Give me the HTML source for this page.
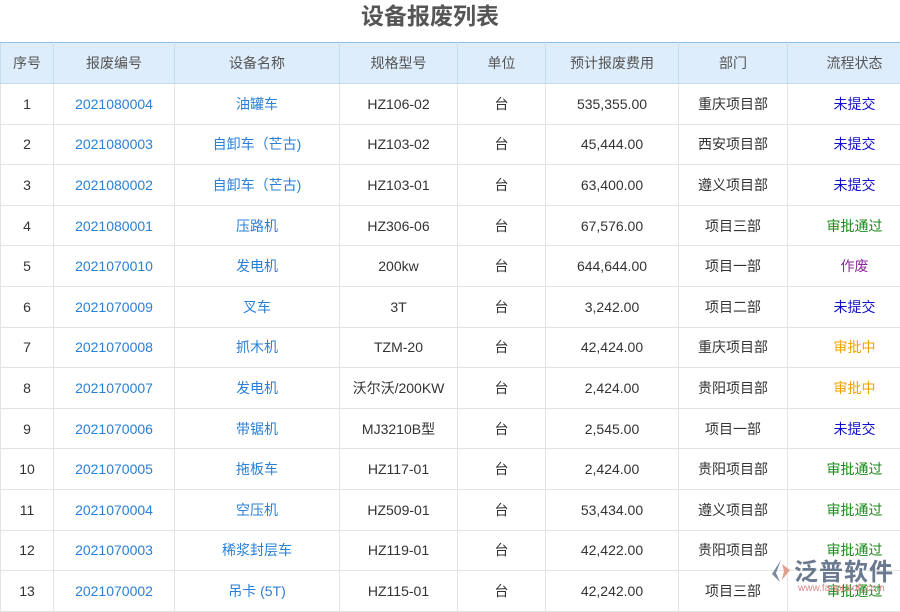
<!DOCTYPE html><html><head><meta charset="utf-8"><style>
body{margin:0;width:900px;height:600px;overflow:hidden;background:#fff;font-family:"Liberation Sans","Noto Sans CJK SC",sans-serif;position:relative}
h1{margin:0;height:42px;line-height:32px;text-align:center;font-size:23px;color:#555;font-weight:bold;padding-right:40px}
table{border-collapse:collapse;position:absolute;top:42px;left:0;width:921px;table-layout:fixed}
td,th{border:1px solid #e3e3e3;text-align:center;font-size:14px;color:#333;height:39.6px;padding:0;font-weight:normal}
th{background:#deedfb;color:#555;border-color:#c6dcef;height:40px}
tr:first-child th{border-top:1px solid #8fbfe8}
.l{color:#2a7fd6}.u{color:#1010c8}.g{color:#1a8a1a}.p{color:#8a2b9a}.o{color:#f0a000}
.wm{position:absolute;left:768px;top:552px;font-size:24px;color:#6a7890;font-weight:bold;letter-spacing:1px;white-space:nowrap}
.wm span{font-size:10px;color:#d88;position:absolute;left:30px;top:31px;letter-spacing:0;font-weight:normal}
</style></head><body>
<h1>设备报废列表</h1>
<table>
<colgroup><col style="width:53px"><col style="width:121px"><col style="width:165px"><col style="width:118px"><col style="width:88px"><col style="width:133px"><col style="width:109px"><col style="width:134px"></colgroup>
<tr><th>序号</th><th>报废编号</th><th>设备名称</th><th>规格型号</th><th>单位</th><th>预计报废费用</th><th>部门</th><th>流程状态</th></tr>
<tr><td>1</td><td class="l">2021080004</td><td class="l">油罐车</td><td>HZ106-02</td><td>台</td><td>535,355.00</td><td>重庆项目部</td><td class="u">未提交</td></tr>
<tr><td>2</td><td class="l">2021080003</td><td class="l">自卸车（芒古)</td><td>HZ103-02</td><td>台</td><td>45,444.00</td><td>西安项目部</td><td class="u">未提交</td></tr>
<tr><td>3</td><td class="l">2021080002</td><td class="l">自卸车（芒古)</td><td>HZ103-01</td><td>台</td><td>63,400.00</td><td>遵义项目部</td><td class="u">未提交</td></tr>
<tr><td>4</td><td class="l">2021080001</td><td class="l">压路机</td><td>HZ306-06</td><td>台</td><td>67,576.00</td><td>项目三部</td><td class="g">审批通过</td></tr>
<tr><td>5</td><td class="l">2021070010</td><td class="l">发电机</td><td>200kw</td><td>台</td><td>644,644.00</td><td>项目一部</td><td class="p">作废</td></tr>
<tr><td>6</td><td class="l">2021070009</td><td class="l">叉车</td><td>3T</td><td>台</td><td>3,242.00</td><td>项目二部</td><td class="u">未提交</td></tr>
<tr><td>7</td><td class="l">2021070008</td><td class="l">抓木机</td><td>TZM-20</td><td>台</td><td>42,424.00</td><td>重庆项目部</td><td class="o">审批中</td></tr>
<tr><td>8</td><td class="l">2021070007</td><td class="l">发电机</td><td>沃尔沃/200KW</td><td>台</td><td>2,424.00</td><td>贵阳项目部</td><td class="o">审批中</td></tr>
<tr><td>9</td><td class="l">2021070006</td><td class="l">带锯机</td><td>MJ3210B型</td><td>台</td><td>2,545.00</td><td>项目一部</td><td class="u">未提交</td></tr>
<tr><td>10</td><td class="l">2021070005</td><td class="l">拖板车</td><td>HZ117-01</td><td>台</td><td>2,424.00</td><td>贵阳项目部</td><td class="g">审批通过</td></tr>
<tr><td>11</td><td class="l">2021070004</td><td class="l">空压机</td><td>HZ509-01</td><td>台</td><td>53,434.00</td><td>遵义项目部</td><td class="g">审批通过</td></tr>
<tr><td>12</td><td class="l">2021070003</td><td class="l">稀浆封层车</td><td>HZ119-01</td><td>台</td><td>42,422.00</td><td>贵阳项目部</td><td class="g">审批通过</td></tr>
<tr><td>13</td><td class="l">2021070002</td><td class="l">吊卡 (5T)</td><td>HZ115-01</td><td>台</td><td>42,242.00</td><td>项目三部</td><td class="g">审批通过</td></tr>
</table>
<div class="wm"><svg width="26" height="26" viewBox="0 0 26 26" style="vertical-align:-4px"><path d="M13 2 L4 16 L12 24 L8 15Z" fill="#7a88a0"/><path d="M14 6 L22 12 L14 22 L16 13Z" fill="#e0a090"/></svg>泛普软件<span>www.fanpusoft.com</span></div>
</body></html>
